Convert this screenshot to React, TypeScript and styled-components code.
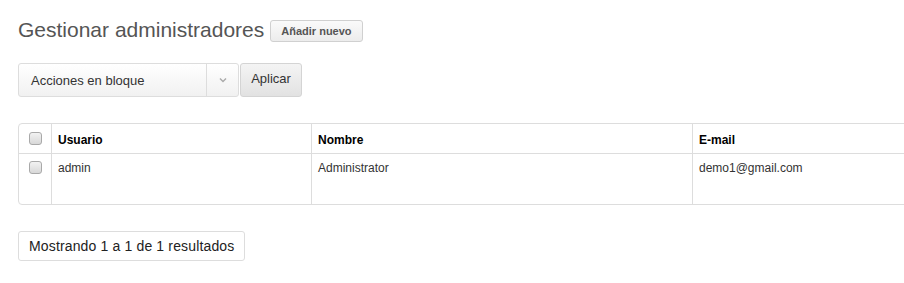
import React from "react";
import styled, { createGlobalStyle } from "styled-components";

const Global = createGlobalStyle`
  html, body { margin: 0; padding: 0; background: #fff; overflow: hidden; }
  body { font-family: "Liberation Sans", Arial, sans-serif; color: #333; }
`;

const Page = styled.div`
  padding: 18px 0 0 18px;
  width: 1000px;
`;

const HeaderRow = styled.div`
  display: flex;
  align-items: center;
  gap: 6px;
  height: 24px;
`;

const Title = styled.h1`
  margin: 0;
  font-size: 21px;
  font-weight: normal;
  color: #555;
  line-height: 24px;
`;

const SmallButton = styled.button`
  height: 22px;
  padding: 0 10px;
  font-family: "Liberation Sans", Arial, sans-serif;
  font-size: 11px;
  font-weight: bold;
  color: #555;
  background: linear-gradient(#fafafa, #ececec);
  border: 1px solid #d0d0d0;
  border-radius: 3px;
  margin-top: 1px;
`;

const Toolbar = styled.div`
  display: flex;
  margin-top: 21px;
  gap: 1px;
`;

const Select = styled.div`
  display: flex;
  width: 221px;
  height: 34px;
  box-sizing: border-box;
  border: 1px solid #ddd;
  border-radius: 3px;
  background: linear-gradient(#fff, #f1f1f1);
`;

const SelectLabel = styled.div`
  flex: 1;
  display: flex;
  align-items: center;
  padding-left: 12px;
  font-size: 13px;
  color: #333;
`;

const SelectArrow = styled.div`
  width: 31px;
  border-left: 1px solid #ddd;
  display: flex;
  align-items: center;
  justify-content: center;
`;

const ApplyButton = styled.button`
  width: 62px;
  height: 34px;
  font-family: "Liberation Sans", Arial, sans-serif;
  font-size: 13px;
  color: #333;
  background: linear-gradient(#f4f4f4, #e2e2e2);
  border: 1px solid #d4d4d4;
  border-radius: 3px;
  padding: 0 0 4px;
`;

const Table = styled.table`
  margin-top: 26px;
  width: 960px;
  border-collapse: separate;
  border-spacing: 0;
  border: 1px solid #ddd;
  border-radius: 4px;
  font-size: 12px;
  table-layout: fixed;
`;

const Th = styled.th<{ $w?: number; $first?: boolean }>`
  width: ${(p) => (p.$w ? `${p.$w}px` : "auto")};
  height: 30px;
  box-sizing: border-box;
  text-align: left;
  vertical-align: top;
  padding: ${(p) => (p.$first ? "8px 0 0" : "9px 6px 0")};
  font-weight: bold;
  color: #000;
  border-bottom: 1px solid #ddd;
  border-left: ${(p) => (p.$first ? "none" : "1px solid #ddd")};
`;

const Td = styled.td<{ $first?: boolean }>`
  height: 50px;
  box-sizing: border-box;
  vertical-align: top;
  padding: ${(p) => (p.$first ? "7px 0 0" : "7px 6px 0")};
  color: #333;
  border-left: ${(p) => (p.$first ? "none" : "1px solid #ddd")};
`;

const CheckCell = styled.div`
  display: flex;
  justify-content: center;
`;

const Check = styled.span`
  display: block;
  width: 13px;
  height: 13px;
  box-sizing: border-box;
  border: 1px solid #a9a9a9;
  border-radius: 3px;
  background: linear-gradient(#f2f2f2, #d8d8d8);
`;

const Pager = styled.div`
  display: inline-flex;
  align-items: center;
  margin-top: 26px;
  height: 30px;
  box-sizing: border-box;
  padding: 0 10px;
  border: 1px solid #ddd;
  border-radius: 3px;
  font-size: 14px;
  letter-spacing: 0.15px;
  color: #222;
`;

export default function App() {
  return (
    <>
      <Global />
      <Page>
        <HeaderRow>
          <Title>Gestionar administradores</Title>
          <SmallButton>Añadir nuevo</SmallButton>
        </HeaderRow>
        <Toolbar>
          <Select>
            <SelectLabel>Acciones en bloque</SelectLabel>
            <SelectArrow>
              <svg width="8" height="6" viewBox="0 0 8 6">
                <path d="M1 1.5 L4 4.5 L7 1.5" fill="none" stroke="#aaa" strokeWidth="1.4" />
              </svg>
            </SelectArrow>
          </Select>
          <ApplyButton>Aplicar</ApplyButton>
        </Toolbar>
        <Table>
          <thead>
            <tr>
              <Th $w={32} $first>
                <CheckCell>
                  <Check />
                </CheckCell>
              </Th>
              <Th $w={260}>Usuario</Th>
              <Th $w={381}>Nombre</Th>
              <Th>E-mail</Th>
            </tr>
          </thead>
          <tbody>
            <tr>
              <Td $first>
                <CheckCell>
                  <Check />
                </CheckCell>
              </Td>
              <Td>admin</Td>
              <Td>Administrator</Td>
              <Td>demo1@gmail.com</Td>
            </tr>
          </tbody>
        </Table>
        <div>
          <Pager>Mostrando 1 a 1 de 1 resultados</Pager>
        </div>
      </Page>
    </>
  );
}
